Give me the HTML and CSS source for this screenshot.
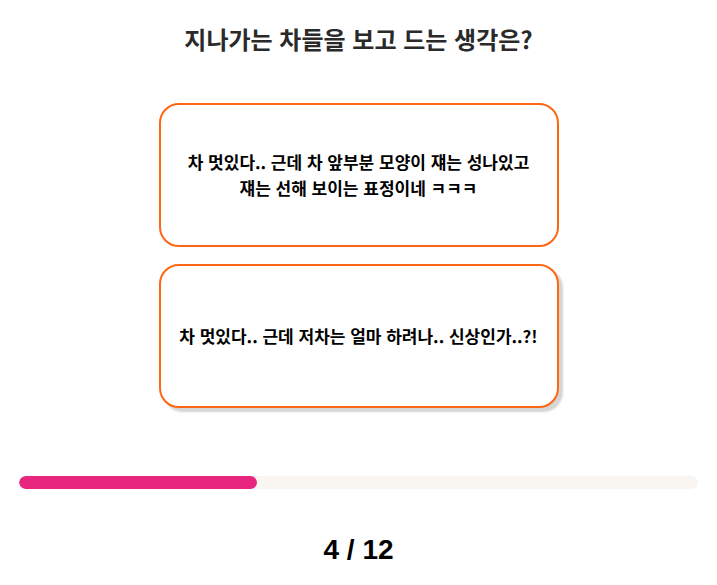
FILE: index.html
```html
<!DOCTYPE html>
<html lang="ko">
<head>
    <meta charset="UTF-8">
    <meta name="viewport" content="width=device-width, initial-scale=1.0">
    <title>차 생각 테스트</title>
    <link rel="stylesheet" href="styles.css">
</head>
<body>
    <main class="quiz">
        <h1 class="question">지나가는 차들을 보고 드는 생각은?</h1>
        <div class="answers">
            <button class="answer">차 멋있다.. 근데 차 앞부분 모양이 쟤는 성나있고<br>쟤는 선해 보이는 표정이네 ㅋㅋㅋ</button>
            <button class="answer hover">차 멋있다.. 근데 저차는 얼마 하려나.. 신상인가..?!</button>
        </div>
        <div class="progress">
            <div class="progress-bar" style="width: 35%"></div>
        </div>
        <p class="count">4 / 12</p>
    </main>
</body>
</html>
```

FILE: styles.css
```css
body {
    margin: 0;
    padding: 0;
    background-color: #fff;
    font-family: "Noto Sans CJK KR", "Noto Sans", sans-serif;
}

.quiz {
    padding: 19px 19px 0;
}

.question {
    margin: 0;
    padding-top: 1px;
    text-align: center;
    font-size: 24px;
    font-weight: 700;
    color: #2a2a2a;
    line-height: 37px;
}

.answers {
    display: flex;
    flex-direction: column;
    align-items: center;
    gap: 17px;
    margin-top: 46px;
}

.answer {
    width: 400px;
    height: 144px;
    box-sizing: border-box;
    padding: 0 10px;
    border: 2px solid #ff6614;
    border-radius: 20px;
    background-color: #fff;
    font-family: inherit;
    font-size: 17px;
    font-weight: 700;
    line-height: 26px;
    color: #000;
    cursor: pointer;
}

.answer.hover {
    box-shadow: 4px 4px 2px #d5d5d5;
}

.progress {
    height: 13px;
    margin-top: 68px;
    background-color: #f9f6f2;
    border-radius: 7px;
    overflow: hidden;
}

.progress-bar {
    height: 100%;
    background-color: #e8267f;
    border-radius: 7px;
}

.count {
    margin: 45px 0 0;
    text-align: center;
    font-family: "Liberation Sans", Arial, sans-serif;
    font-size: 28px;
    font-weight: 700;
    color: #000;
}
```
